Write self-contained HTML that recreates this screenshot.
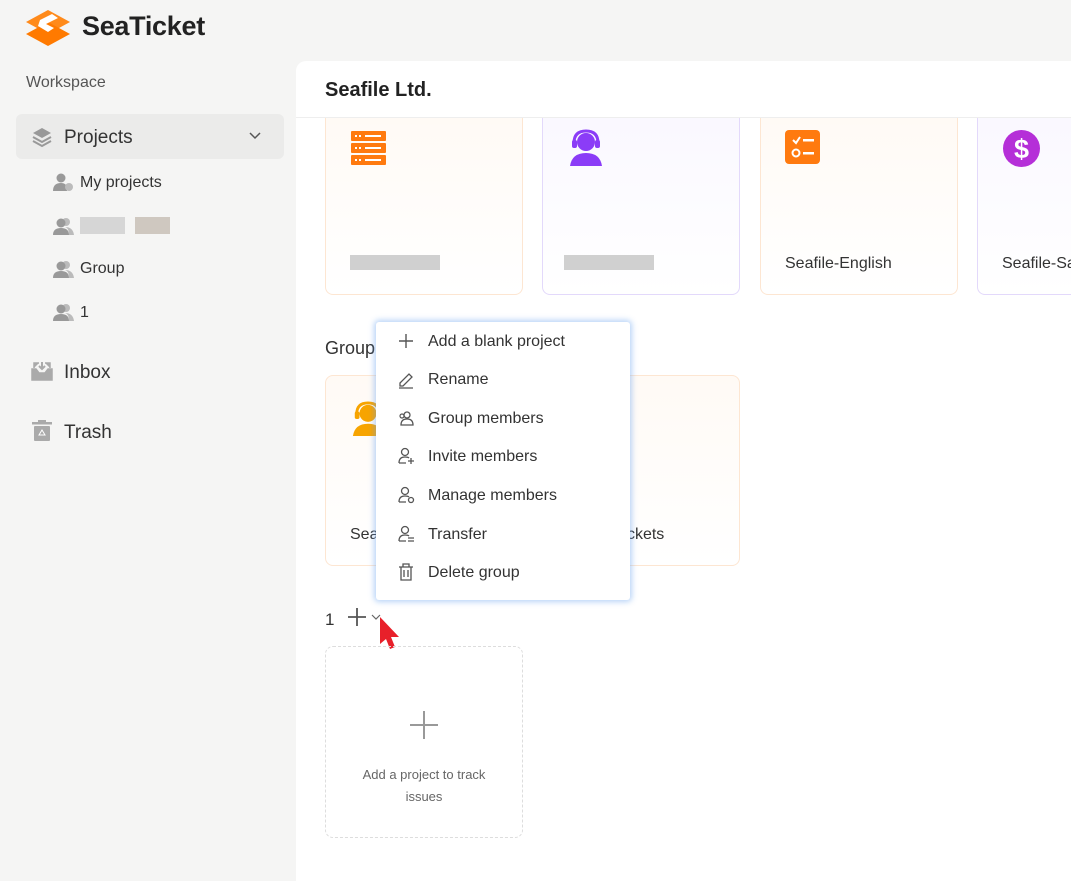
<!DOCTYPE html>
<html><head><meta charset="utf-8"><style>
*{box-sizing:border-box;margin:0;padding:0}
body{width:1071px;height:862px;overflow:hidden;background:#f5f5f4;font-family:"Liberation Sans",sans-serif;color:#222;position:relative}
.abs{position:absolute}
.side{font-size:16px;color:#333}
.main{position:absolute;left:296px;top:61px;width:790px;height:820px;background:#fff;border-radius:10px 0 0 0}
.card{position:absolute;border:1px solid #fde6d2;border-radius:8px;background:linear-gradient(#fffaf5,#fff)}
.card.p{border-color:#e3d9fb;background:linear-gradient(#faf8ff,#fff)}
.menu{position:absolute;left:376px;top:322px;width:254px;height:278px;background:#fff;border-radius:3px;box-shadow:0 0 6px 2px rgba(100,160,240,.45)}
.mi{position:absolute;left:0;height:38px;width:100%;font-size:16px;color:#333}
.mi svg{position:absolute;left:21px;top:0}
.mi span{position:absolute;left:52px;top:2px}
.blur{position:absolute;background:#ccc}
</style></head><body>
<svg class="abs" style="left:24px;top:8px" width="48" height="40" viewBox="0 0 48 40">
<path d="M24 2 L46 14 L24 26 L2 14Z" fill="#ff8a1a"/>
<path d="M24 14 L46 26 L24 38 L2 26Z" fill="#ff7a00"/>
<path d="M16 12 L28 6 L34 10 L22 16 L30 20 L24 24 L14 18Z" fill="#fff"/>
</svg>
<div class="abs" style="left:82px;top:11px;font-size:27px;font-weight:bold;color:#222;letter-spacing:-0.3px">SeaTicket</div>
<div class="abs side" style="left:26px;top:74px;font-size:16px;color:#555">Workspace</div>
<div class="abs" style="left:16px;top:114px;width:268px;height:45px;background:#ebebea;border-radius:6px"></div>
<svg class="abs" style="left:31px;top:126px" width="22" height="22" viewBox="0 0 22 22"><path d="M11 2 L20 7 L11 12 L2 7Z" fill="#999"/><path d="M2 11 L11 16 L20 11" stroke="#999" stroke-width="2" fill="none"/><path d="M2 15 L11 20 L20 15" stroke="#999" stroke-width="2" fill="none"/></svg>
<div class="abs side" style="left:64px;top:127px;font-size:19px">Projects</div>
<svg class="abs" style="left:248px;top:131px" width="14" height="10"><path d="M2 2 L7 7 L12 2" stroke="#555" stroke-width="1.5" fill="none"/></svg>
<svg class="abs" style="left:53px;top:172px" width="22" height="20" viewBox="0 0 22 20"><circle cx="8" cy="6" r="4.5" fill="#999"/><path d="M0 19 Q0 11 8 11 Q14 11 14 17 L14 19Z" fill="#999"/><circle cx="16" cy="15" r="4" fill="#bbb"/></svg>
<div class="abs side" style="left:80px;top:174px">My projects</div>
<svg class="abs" style="left:53px;top:217px" width="22" height="18" viewBox="0 0 22 18"><circle cx="13" cy="5" r="4" fill="#bbb"/><circle cx="8" cy="6" r="4.5" fill="#999"/><path d="M0 18 Q0 11 8 11 Q16 11 16 18Z" fill="#999"/><path d="M16 18 Q16 11 12 10 Q20 10 21 18Z" fill="#bbb"/></svg>
<div class="blur" style="left:80px;top:217px;width:45px;height:17px;background:#d6d6d6"></div>
<div class="blur" style="left:135px;top:217px;width:35px;height:17px;background:#cfc8c0"></div>
<svg class="abs" style="left:53px;top:260px" width="22" height="18" viewBox="0 0 22 18"><circle cx="13" cy="5" r="4" fill="#bbb"/><circle cx="8" cy="6" r="4.5" fill="#999"/><path d="M0 18 Q0 11 8 11 Q16 11 16 18Z" fill="#999"/><path d="M16 18 Q16 11 12 10 Q20 10 21 18Z" fill="#bbb"/></svg>
<div class="abs side" style="left:80px;top:260px">Group</div>
<svg class="abs" style="left:53px;top:303px" width="22" height="18" viewBox="0 0 22 18"><circle cx="13" cy="5" r="4" fill="#bbb"/><circle cx="8" cy="6" r="4.5" fill="#999"/><path d="M0 18 Q0 11 8 11 Q16 11 16 18Z" fill="#999"/><path d="M16 18 Q16 11 12 10 Q20 10 21 18Z" fill="#bbb"/></svg>
<div class="abs side" style="left:80px;top:304px">1</div>
<svg class="abs" style="left:31px;top:361px" width="22" height="20" viewBox="0 0 22 20"><path d="M1 8 L5 8 L8 12 L14 12 L17 8 L21 8 L21 19 L1 19Z M3 7 L3 2 L8 2 M19 7 L19 2 L14 2" fill="#aaa" stroke="#aaa" stroke-width="1.5"/><path d="M11 1 L11 8 M8 5 L11 8 L14 5" stroke="#aaa" stroke-width="2" fill="none"/></svg>
<div class="abs side" style="left:64px;top:362px;font-size:19px">Inbox</div>
<svg class="abs" style="left:31px;top:420px" width="22" height="22" viewBox="0 0 22 22"><rect x="1" y="2" width="20" height="2.5" fill="#aaa"/><rect x="7" y="0" width="8" height="3" fill="#aaa"/><rect x="3" y="6" width="16" height="15" rx="1" fill="#aaa"/><path d="M11 10 L14 15 L8 15Z" stroke="#fff" stroke-width="1" fill="none"/></svg>
<div class="abs side" style="left:64px;top:422px;font-size:19px">Trash</div>

<div class="main"></div>
<div class="abs" style="left:325px;top:79px;font-size:20px;font-weight:bold;color:#222">Seafile Ltd.</div>

<div class="card" style="left:325px;top:118px;width:198px;height:177px;border-top:none;border-radius:0 0 8px 8px"></div>
<svg class="abs" style="left:351px;top:131px" width="35" height="34"><rect x="0" y="0" width="35" height="10" rx="1" fill="#ff7a0f"/><rect x="0" y="12" width="35" height="10" rx="1" fill="#ff7a0f"/><rect x="0" y="24" width="35" height="10" rx="1" fill="#ff7a0f"/><g fill="#fff"><rect x="4" y="4" width="2" height="2"/><rect x="8" y="4" width="2" height="2"/><rect x="14" y="4" width="16" height="2"/><rect x="4" y="16" width="2" height="2"/><rect x="8" y="16" width="2" height="2"/><rect x="14" y="16" width="16" height="2"/><rect x="4" y="28" width="2" height="2"/><rect x="8" y="28" width="2" height="2"/><rect x="14" y="28" width="16" height="2"/></g></svg>
<div class="blur" style="left:350px;top:255px;width:90px;height:15px;background:#d0d0d0"></div>
<div class="card p" style="left:542px;top:118px;width:198px;height:177px;border-top:none;border-radius:0 0 8px 8px"></div>
<svg class="abs" style="left:568px;top:129px" width="36" height="38" viewBox="0 0 36 38"><circle cx="18" cy="13" r="9" fill="#8b3cf7"/><path d="M6 14 Q6 2 18 2 Q30 2 30 14" stroke="#8b3cf7" stroke-width="3" fill="none"/><rect x="4" y="11" width="5" height="8" rx="2" fill="#8b3cf7"/><rect x="27" y="11" width="5" height="8" rx="2" fill="#8b3cf7"/><path d="M2 37 Q4 24 18 24 Q32 24 34 37Z" fill="#8b3cf7"/></svg>
<div class="blur" style="left:564px;top:255px;width:90px;height:15px;background:#d0d0d0"></div>
<div class="card" style="left:760px;top:118px;width:198px;height:177px;border-top:none;border-radius:0 0 8px 8px"></div>
<svg class="abs" style="left:785px;top:130px" width="35" height="34"><rect width="35" height="34" rx="4" fill="#ff7a0f"/><path d="M8 10 L11 13 L15 7" stroke="#fff" stroke-width="2" fill="none"/><rect x="18" y="9" width="11" height="2.5" fill="#fff"/><circle cx="11" cy="23" r="3.5" stroke="#fff" stroke-width="2" fill="none"/><rect x="18" y="22" width="11" height="2.5" fill="#fff"/></svg>
<div class="abs" style="left:785px;top:255px;font-size:16px;color:#333">Seafile-English</div>
<div class="card p" style="left:977px;top:118px;width:120px;height:177px;border-top:none;border-radius:0 0 8px 8px"></div>
<svg class="abs" style="left:1002px;top:129px" width="39" height="39"><circle cx="19.5" cy="19.5" r="18.5" fill="#b52fd8"/><text x="19.5" y="29" text-anchor="middle" font-family="Liberation Sans" font-weight="bold" font-size="27" fill="#fff">$</text></svg>
<div class="abs" style="left:1002px;top:255px;font-size:16px;color:#333;white-space:nowrap">Seafile-Sales</div>
<div class="abs" style="left:296px;top:117px;width:775px;height:1px;background:#eee"></div>

<div class="abs" style="left:325px;top:338px;font-size:18px;color:#333">Group</div>
<div class="card" style="left:325px;top:375px;width:415px;height:191px"></div>
<svg class="abs" style="left:351px;top:400px" width="34" height="38" viewBox="0 0 36 38"><circle cx="18" cy="13" r="9" fill="#f7a400"/><path d="M6 14 Q6 2 18 2 Q30 2 30 14" stroke="#f7a400" stroke-width="3" fill="none"/><rect x="4" y="11" width="5" height="8" rx="2" fill="#f7a400"/><path d="M2 37 Q4 24 18 24 Q32 24 34 37Z" fill="#f7a400"/></svg>
<div class="abs" style="left:350px;top:526px;font-size:16px;color:#333">Seafile</div>
<div class="abs" style="left:600px;top:526px;font-size:16px;color:#333">e-Tickets</div>

<div class="abs" style="left:325px;top:610px;font-size:17px;color:#333">1</div>
<svg class="abs" style="left:347px;top:607px" width="40" height="20"><path d="M10 1 V19 M1 10 H19" stroke="#555" stroke-width="1.8"/><path d="M25 8 L29 12 L33 8" stroke="#666" stroke-width="1.2" fill="none"/></svg>
<svg class="abs" style="left:378px;top:616px" width="26" height="36" viewBox="0 0 26 36"><path d="M2 1 L2 28 L8 23 L12 33 L17 31 L13 21 L21 21Z" fill="#e8202a"/></svg>
<div class="abs" style="left:325px;top:646px;width:198px;height:192px;border:1px dashed #ddd;border-radius:8px"></div>
<svg class="abs" style="left:410px;top:711px" width="28" height="28"><path d="M14 0 V28 M0 14 H28" stroke="#999" stroke-width="2"/></svg>
<div class="abs" style="left:325px;top:764px;width:198px;text-align:center;font-size:13px;line-height:22px;color:#666">Add a project to track<br>issues</div>

<div class="menu">
<div class="mi" style="top:9px"><svg width="18" height="20"><path d="M9 3 V17 M2 10 H16" stroke="#555" stroke-width="1.4"/></svg><span>Add a blank project</span></div>
<div class="mi" style="top:47px"><svg width="18" height="20"><path d="M3 14 L12 5 L15 8 L6 17 L3 17Z M2 19 H16" stroke="#555" stroke-width="1.3" fill="none"/></svg><span>Rename</span></div>
<div class="mi" style="top:86px"><svg width="18" height="20"><circle cx="10" cy="7" r="3" stroke="#555" stroke-width="1.3" fill="none"/><path d="M4 17 Q4 11 10 11 Q16 11 16 17Z" stroke="#555" stroke-width="1.3" fill="none"/><circle cx="5" cy="8" r="2" stroke="#555" stroke-width="1.2" fill="none"/></svg><span>Group members</span></div>
<div class="mi" style="top:124px"><svg width="18" height="20"><circle cx="8" cy="6" r="3.5" stroke="#555" stroke-width="1.3" fill="none"/><path d="M2 17 Q2 11 8 11 Q11 11 12 12 M2 17 H9" stroke="#555" stroke-width="1.3" fill="none"/><path d="M14 12 V18 M11 15 H17" stroke="#555" stroke-width="1.3"/></svg><span>Invite members</span></div>
<div class="mi" style="top:163px"><svg width="18" height="20"><circle cx="8" cy="6" r="3.5" stroke="#555" stroke-width="1.3" fill="none"/><path d="M2 17 Q2 11 8 11 Q11 11 12 12 M2 17 H9" stroke="#555" stroke-width="1.3" fill="none"/><circle cx="14" cy="15" r="2.5" stroke="#555" stroke-width="1.3" fill="none"/></svg><span>Manage members</span></div>
<div class="mi" style="top:202px"><svg width="18" height="20"><circle cx="8" cy="6" r="3.5" stroke="#555" stroke-width="1.3" fill="none"/><path d="M2 17 Q2 11 8 11 Q11 11 12 12 M2 17 H9" stroke="#555" stroke-width="1.3" fill="none"/><path d="M11 14 H17 M11 17 H17" stroke="#555" stroke-width="1.2"/></svg><span>Transfer</span></div>
<div class="mi" style="top:240px"><svg width="18" height="20"><path d="M2 5 H16 M6 5 V2 H12 V5 M4 5 V18 H14 V5 M7 8 V15 M11 8 V15" stroke="#555" stroke-width="1.3" fill="none"/></svg><span>Delete group</span></div>
</div>
</body></html>
